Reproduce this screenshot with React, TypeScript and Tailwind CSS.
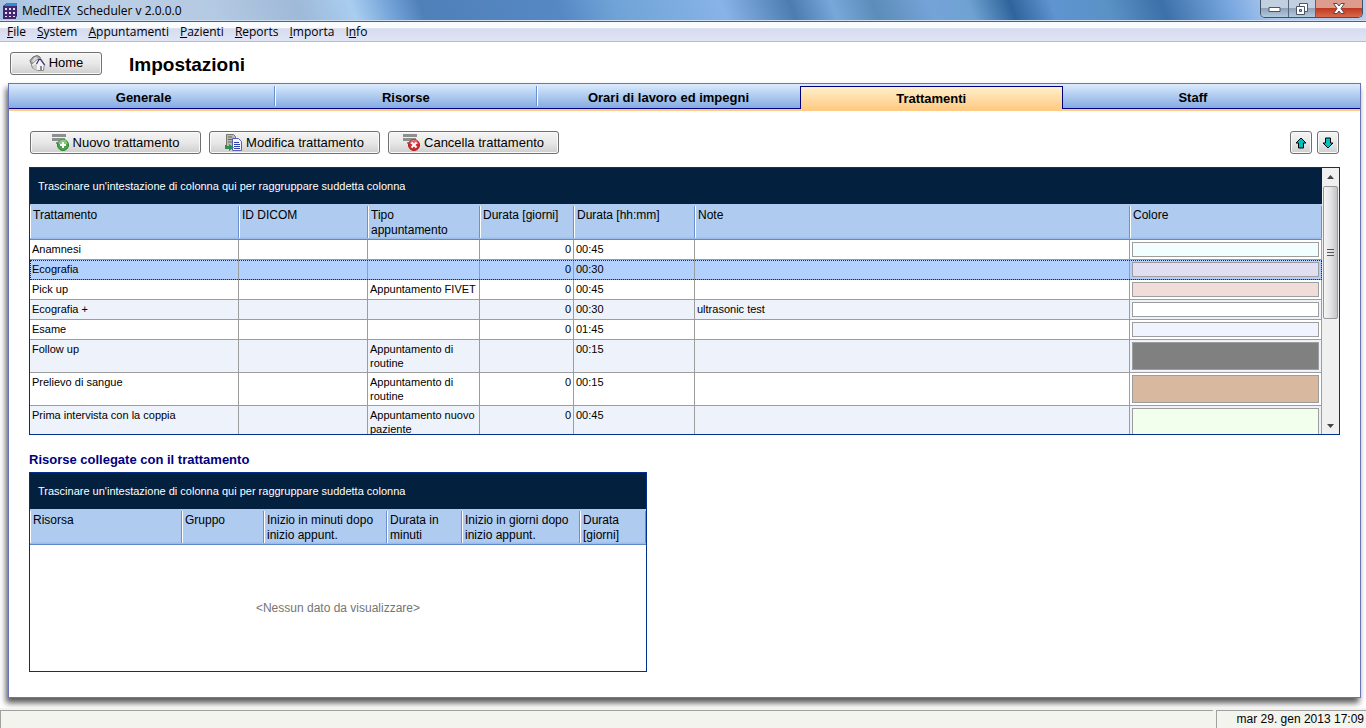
import React, { useState } from 'react';

interface Treatment {
  name: string;
  dicom: string;
  type: string;
  days: string;
  time: string;
  note: string;
  swatch: string;
  tall?: boolean;
}

const MENU = [
  ['', 'F', 'ile'],
  ['', 'S', 'ystem'],
  ['', 'A', 'ppuntamenti'],
  ['', 'P', 'azienti'],
  ['', 'R', 'eports'],
  ['', 'I', 'mporta'],
  ['I', 'n', 'fo'],
];

const TABS = ['Generale', 'Risorse', 'Orari di lavoro ed impegni', 'Trattamenti', 'Staff'];

const TREATMENTS: Treatment[] = [
  { name: 'Anamnesi', dicom: '', type: '', days: '0', time: '00:45', note: '', swatch: 'bg-[#f2fdff]' },
  { name: 'Ecografia', dicom: '', type: '', days: '0', time: '00:30', note: '', swatch: 'bg-[#e0def0]' },
  { name: 'Pick up', dicom: '', type: 'Appuntamento FIVET', days: '0', time: '00:45', note: '', swatch: 'bg-[#f0dcd8]' },
  { name: 'Ecografia +', dicom: '', type: '', days: '0', time: '00:30', note: 'ultrasonic test', swatch: 'bg-white' },
  { name: 'Esame', dicom: '', type: '', days: '0', time: '01:45', note: '', swatch: 'bg-[#f0f4ff]' },
  { name: 'Follow up', dicom: '', type: 'Appuntamento di routine', days: '', time: '00:15', note: '', swatch: 'bg-[#808080]', tall: true },
  { name: 'Prelievo di sangue', dicom: '', type: 'Appuntamento di routine', days: '0', time: '00:15', note: '', swatch: 'bg-[#d8b9a0]', tall: true },
  { name: 'Prima intervista con la coppia', dicom: '', type: 'Appuntamento nuovo paziente', days: '0', time: '00:45', note: '', swatch: 'bg-[#f2ffec]', tall: true },
];

const TREATMENT_COLUMNS = [
  { label: 'Trattamento', width: 'w-[209px]' },
  { label: 'ID DICOM', width: 'w-[129px]' },
  { label: 'Tipo appuntamento', width: 'w-[112px]' },
  { label: 'Durata [giorni]', width: 'w-[94px]' },
  { label: 'Durata [hh:mm]', width: 'w-[121px]' },
  { label: 'Note', width: '' },
  { label: 'Colore', width: 'w-[192px]' },
];

const RESOURCE_COLUMNS = [
  { label: 'Risorsa', width: 'w-[152px]' },
  { label: 'Gruppo', width: 'w-[82px]' },
  { label: 'Inizio in minuti dopo inizio appunt.', width: 'w-[123px]' },
  { label: 'Durata in minuti', width: 'w-[75px]' },
  { label: 'Inizio in giorni dopo inizio appunt.', width: 'w-[118px]' },
  { label: 'Durata [giorni]', width: '' },
];

const AppIcon = () => (
  <svg width="16" height="16" viewBox="0 0 16 16" aria-hidden="true">
    <path d="M1 3 5 0h10v13l-2 3H1z" fill="#3b2266" />
    <path d="M5 0h10v3H2z" fill="#2b8fd0" />
    <path d="M1 3h13v13H1z" fill="#43286f" />
    <path d="M3 5h2v2H3zM7 5h2v2H7zM11 5h2v2h-2zM3 9h2v2H3zM7 9h2v2H7zM11 9h2v2h-2zM3 13h2v1H3zM7 13h2v1H7zM11 13h2v1h-2z" fill="#e6dff5" />
  </svg>
);

const HomeIcon = () => (
  <svg width="17" height="17" viewBox="0 0 17 17" aria-hidden="true">
    <path d="M1 5.500 4 2l4-1.500L11 2l.5 3L6 11 3.500 12z" fill="#a8a8a8" stroke="#6c6c6c" />
    <path d="m3 6 3-4 3 1-4 5z" fill="#dcdcdc" />
    <path d="M2.500 9.500 8 4.500l4-.5 4 6-1 1-.5 4.500h-6L3.500 13z" fill="#f4f4f4" stroke="#8a8a8a" />
    <path d="M4 10v3l4 2.500V9z" fill="#cfcfcf" />
    <path d="m7.500 9 2.500-4.500 1.500 0 4 5.500" fill="none" stroke="#2c2c80" strokeWidth="1.2" />
    <path d="M11 11h2v4h-2z" fill="#8c8c8c" />
  </svg>
);

const ListLines = () => <path d="M0 0h14v3H0zM0 4h13v3H0zM4 8h5v2H4z" fill="#8c9190" />;

const AddIcon = () => (
  <svg width="17" height="17" viewBox="0 0 17 17" aria-hidden="true">
    <ListLines />
    <circle cx="11" cy="11" r="5.5" fill="#48a445" stroke="#2f7f31" />
    <path d="M6.500 10a4.500 4.500 0 0 1 9 0z" fill="#86c97c" />
    <path d="M10 8h2v2h2v2h-2v2h-2v-2H8v-2h2z" fill="#fff" />
  </svg>
);

const DeleteIcon = () => (
  <svg width="17" height="17" viewBox="0 0 17 17" aria-hidden="true">
    <ListLines />
    <circle cx="11" cy="11" r="5.5" fill="#cf2a2e" stroke="#a91f26" />
    <path d="M6.500 10a4.500 4.500 0 0 1 9 0z" fill="#e2686a" />
    <path d="m8.500 8.500 5 5m0-5-5 5" stroke="#fff" strokeWidth="2" />
  </svg>
);

const EditIcon = () => (
  <svg width="17" height="17" viewBox="0 0 17 17" aria-hidden="true">
    <path d="M1.500.5h7l2 2V13h-9z" fill="#b9b9ae" stroke="#77776c" />
    <path d="M3 3h4M3 5.500h5M3 8h4" stroke="#66665c" />
    <path d="M7.500 4.500h6l3 3v9h-9z" fill="#f4f6ff" stroke="#5c5cb8" />
    <path d="M9 8.500h5M9 10.500h6M9 12.500h6M9 14.500h6" stroke="#2c3fa8" />
    <path d="M0 11v4h4v2l5-3.500L4 10v2H2v-1z" fill="#2d9048" />
  </svg>
);

const ArrowIcon = ({ down }: { down?: boolean }) => (
  <svg width="12" height="12" viewBox="0 0 12 12" className={down ? 'rotate-180' : ''} aria-hidden="true">
    <path d="m6 1 5 5H8.500v5h-5V6H1z" fill="#00c0c0" stroke="#000" strokeWidth="1" />
  </svg>
);

const ToolButton: React.FC<{ className?: string; label?: string; children: React.ReactNode }> = ({ className = '', label, children }) => (
  <button
    type="button"
    aria-label={label}
    className={`flex h-[23px] items-center justify-center rounded-[3px] border border-[#707070] bg-gradient-to-b from-[#f4f4f4] via-[#e8e8e8] to-[#cecece] text-[13px] leading-4 shadow-[inset_0_0_0_1px_#fafafa] ${className}`}
  >
    {children}
  </button>
);

const GroupBar = () => (
  <div className="flex h-9 items-center bg-[#03203e] px-2 text-[11px] text-white">
    Trascinare un'intestazione di colonna qui per raggruppare suddetta colonna
  </div>
);

const HeaderRow = ({ columns }: { columns: { label: string; width: string }[] }) => (
  <thead>
    <tr className="h-9 bg-linear-to-b from-[#afcbf0] from-90% to-[#8fb2e4]">
      {columns.map((col) => (
        <th key={col.label} className={`border-b border-[#6088cc] p-0 text-left align-top font-normal ${col.width}`}>
          <div className="mt-[2px] h-8 border-r border-l border-r-[#6a90d0] border-l-white pt-[2px] pr-2 pl-[2px] text-[12px] leading-[15px]">
            {col.label}
          </div>
        </th>
      ))}
    </tr>
  </thead>
);

const TreatmentTable = () => {
  const [selected, setSelected] = useState(1);
  const cell = 'border-r border-b border-[#9d9d9d] px-[2px] pt-[2px] align-top';

  return (
    <div className="flex h-[268px] border border-[#00308a]">
      <div className="min-w-0 flex-1 overflow-hidden">
        <GroupBar />
        <table className="w-full table-fixed border-separate border-spacing-0 text-[11px] leading-[14px]">
          <HeaderRow columns={TREATMENT_COLUMNS} />
          <tbody>
            {TREATMENTS.map((t, i) => {
              const background = i === selected ? 'bg-[#b3d1ff] outline-1 -outline-offset-1 outline-dotted outline-[#3a2a10]' : i % 2 ? 'bg-[#edf2fb]' : 'bg-white';
              return (
                <tr key={t.name} onClick={() => setSelected(i)} className={`${t.tall ? 'h-[33px]' : 'h-5'} ${background}`}>
                  <td className={cell}>{t.name}</td>
                  <td className={cell}>{t.dicom}</td>
                  <td className={cell}>{t.type}</td>
                  <td className={`${cell} text-right`}>{t.days}</td>
                  <td className={cell}>{t.time}</td>
                  <td className={cell}>{t.note}</td>
                  <td className="border-r border-b border-[#9d9d9d] p-[2px] align-top">
                    <div className={`border border-[#9d9d9d] ${t.tall ? 'h-7' : 'h-[15px]'} ${t.swatch}`} />
                  </td>
                </tr>
              );
            })}
          </tbody>
        </table>
      </div>
      <div className="flex w-[17px] flex-col items-center bg-[#f0f0f0]">
        <button type="button" aria-label="Scorri su" className="flex h-[18px] w-full items-center justify-center">
          <svg width="7" height="4" viewBox="0 0 7 4"><path d="M0 4 3.500 0 7 4z" fill="#444" /></svg>
        </button>
        <div className="flex h-[133px] w-[15px] flex-col items-center justify-center gap-[2px] rounded-[2px] border border-[#979797] bg-gradient-to-r from-[#f5f5f5] via-[#e4e4e6] to-[#c4c4c8]">
          <span className="h-px w-[7px] bg-[#555]" />
          <span className="h-px w-[7px] bg-[#555]" />
          <span className="h-px w-[7px] bg-[#555]" />
        </div>
        <button type="button" aria-label="Scorri giù" className="mt-auto flex h-[17px] w-full items-center justify-center">
          <svg width="7" height="4" viewBox="0 0 7 4"><path d="M0 0h7L3.500 4z" fill="#444" /></svg>
        </button>
      </div>
    </div>
  );
};

const ResourceTable = () => (
  <div className="flex h-[200px] w-[618px] max-w-full flex-col border border-[#00308a]">
    <GroupBar />
    <table className="w-full table-fixed border-separate border-spacing-0">
      <HeaderRow columns={RESOURCE_COLUMNS} />
    </table>
    <div className="flex flex-1 items-center justify-center text-[12px] text-[#757575]">&lt;Nessun dato da visualizzare&gt;</div>
  </div>
);

const TitleBar = () => (
  <header className="flex h-[22px] items-start justify-between border-b border-[#4d6180] bg-[linear-gradient(70deg,#a6c2e2_0%,#bdd0e6_6%,#b4c9e2_16%,#9fb9d8_22%,#a9cdf0_26%,#6f9fd6_29%,#4f80b8_31%,#5688c4_41%,#6fa3d6_45%,#88b3e8_53%,#4c7cb0_58%,#78a8da_61%,#5c8cb8_64%,#75a3d8_68%,#6fa2d2_71%,#2f649c_74%,#5e94d0_77%,#5a92c6_81%,#3c70a8_85%,#7aa8e0_90%,#a9c8ee_93%,#b4cfee_100%)] shadow-[inset_0_-1px_0_#cfdff2]">
    <div className="flex h-full items-center gap-1 pl-[2px] font-['Open_Sans',sans-serif] text-[12px]">
      <AppIcon />
      <span className="whitespace-pre">MedITEX  Scheduler v 2.0.0.0</span>
    </div>
    <div className="mr-[3px] flex h-[18px] overflow-hidden rounded-b-[5px] border border-t-0 border-[#3f5068]">
      <button type="button" aria-label="Riduci a icona" className="flex w-7 items-center justify-center border-r border-[#54667e] bg-linear-to-b from-[#c2cfde] from-45% via-[#8ea3bb] via-50% to-[#b5c8dc]">
        <svg width="13" height="7" viewBox="0 0 13 7"><path d="M1 2.500h11v4H1z" fill="#fff" stroke="#4b5566" /></svg>
      </button>
      <button type="button" aria-label="Ripristina" className="flex w-[27px] items-center justify-center border-r border-[#54667e] bg-linear-to-b from-[#c2cfde] from-45% via-[#8ea3bb] via-50% to-[#b5c8dc]">
        <svg width="12" height="12" viewBox="0 0 12 12">
          <path d="M3.500.5h8v8h-8z" fill="#fff" stroke="#4b5566" />
          <path d="M.5 3.500h8v8h-8z" fill="#fff" stroke="#4b5566" />
          <path d="M3.500 6.500h2v2h-2z" fill="#9fb2c8" stroke="#4b5566" />
        </svg>
      </button>
      <button type="button" aria-label="Chiudi" className="flex w-[46px] items-center justify-center bg-linear-to-b from-[#dc9c8e] from-45% via-[#bf3820] via-50% to-[#d8694a]">
        <svg width="12" height="11" viewBox="0 0 12 11">
          <path d="M.5.5h3.500L6 3 8 .5h3.500L8 5.500l3.500 5H8L6 8l-2 2.500H.5l3.500-5z" fill="#fff" stroke="#564a58" />
        </svg>
      </button>
    </div>
  </header>
);

const App: React.FC = () => {
  const [activeTab, setActiveTab] = useState('Trattamenti');

  return (
    <div className="flex min-h-screen flex-col bg-white font-['Liberation_Sans',Arial,sans-serif] text-black">
      <TitleBar />
      <nav className="flex h-5 items-center gap-[11px] border-b border-[#b6bccc] bg-linear-to-b from-[#fafbfd] from-30% via-[#d6dcee] via-35% to-[#e0e5f6] pl-[7px] font-['Open_Sans',sans-serif] text-[12px]">
        {MENU.map(([before, key, after]) => (
          <button key={before + key + after} type="button">
            {before}
            <span className="underline">{key}</span>
            {after}
          </button>
        ))}
      </nav>

      <div className="flex h-[41px] items-center gap-[27px] pt-px pl-[10px]">
        <ToolButton className="w-[92px] gap-[3px]">
          <HomeIcon />
          Home
        </ToolButton>
        <h1 className="pt-[3px] text-[19px] leading-6 font-bold">Impostazioni</h1>
      </div>

      <main className="mr-[5px] mb-[10px] ml-2 flex flex-1 flex-col border border-[#6a74b8] bg-white shadow-[-2px_5px_6px_rgba(0,0,0,0.65)]">
        <div role="tablist" className="grid h-[25px] grid-cols-5 border-b border-[#000080] bg-linear-to-b from-[#dcebfc] to-[#84abe2] pr-9 pl-1">
          {TABS.map((tab, i) => (
            <button
              key={tab}
              type="button"
              role="tab"
              aria-selected={tab === activeTab}
              onClick={() => setActiveTab(tab)}
              className={
                tab === activeTab
                  ? 'mt-[2px] -mr-px -mb-px border border-b-0 border-[#000080] bg-linear-to-b from-[#ffefca] to-[#ffcb85] pt-[2px] text-[13px] leading-5 font-bold'
                  : `my-[2px] pt-[3px] text-[13px] leading-4 font-bold ${i < 2 ? 'border-r border-[#6a90d0] shadow-[1px_0_0_#ffffff]' : ''}`
              }
            >
              {tab}
            </button>
          ))}
        </div>
        <div className="h-[2px] bg-[#ffcb85]" />

        <div className="flex flex-1 flex-col px-5 pt-5">
          <div className="flex gap-2 pl-px">
            <ToolButton className="w-[171px] gap-1"><AddIcon />Nuovo trattamento</ToolButton>
            <ToolButton className="w-[171px] gap-1"><EditIcon />Modifica trattamento</ToolButton>
            <ToolButton className="w-[171px] gap-1"><DeleteIcon />Cancella trattamento</ToolButton>
            <div className="mr-px ml-auto flex gap-[5px]">
              <ToolButton className="w-[22px]" label="Sposta su"><ArrowIcon /></ToolButton>
              <ToolButton className="w-[22px]" label="Sposta giù"><ArrowIcon down /></ToolButton>
            </div>
          </div>

          <div className="mt-[13px]">
            <TreatmentTable />
          </div>

          <h2 className="mt-[17px] mb-1 text-[13px] leading-4 font-bold text-[#000080]">Risorse collegate con il trattamento</h2>
          <ResourceTable />
        </div>
      </main>

      <footer className="flex h-5 gap-[3px] bg-[#f4f4ef] pt-[2px] text-[12px]">
        <div className="flex-1 border-t border-l border-[#a0a0a0]" />
        <div className="border-t border-l border-[#a0a0a0] pr-[2px] pl-5 leading-[17px]">mar 29. gen 2013 17:09</div>
      </footer>
    </div>
  );
};

export default App;
